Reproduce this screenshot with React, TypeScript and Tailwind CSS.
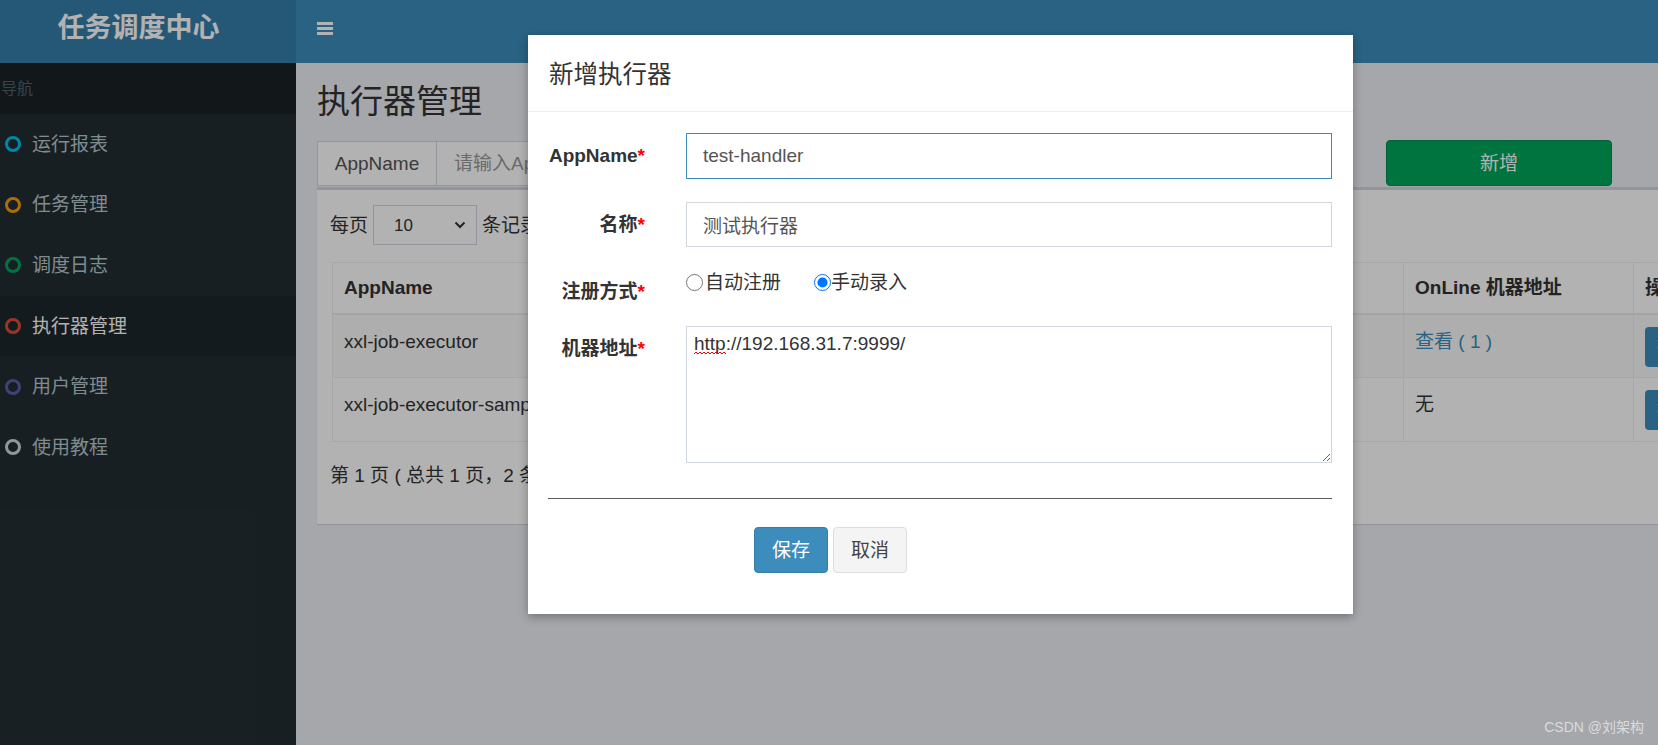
import React from 'react';

// Admin page of the scheduler, with the "新增执行器" dialog open on top

const menu = [
  { name: '运行报表', ring: 'border-[#00c0ef]' },
  { name: '任务管理', ring: 'border-[#f39c12]' },
  { name: '调度日志', ring: 'border-[#00a65a]' },
  { name: '执行器管理', ring: 'border-[#dd4b39]', active: true },
  { name: '用户管理', ring: 'border-[#605ca8]' },
  { name: '使用教程', ring: 'border-[#d2d6de]' },
];

const rows = [
  { app: 'xxl-job-executor', title: '示例执行器', type: '自动注册', online: '查看 ( 1 )', link: true },
  { app: 'xxl-job-executor-sample', title: '测试执行器', type: '手动录入', online: '无', link: false },
];

function Sidebar() {
  return (
    <aside className="w-[296px] shrink-0 bg-[#222d32]">
      <div className="h-[51px] bg-[#1a2226] flex items-center pl-[1px] text-[16px] text-[#4b646f]">导航</div>
      <ul>
        {menu.map((item) => (
          <li
            key={item.name}
            className={`h-[60.6px] flex items-center text-[19px] ${item.active ? 'bg-[#1e282c] text-white' : 'text-[#b8c7ce]'}`}
          >
            <span className={`ml-[5px] w-[16px] h-[16px] rounded-full border-[3px] ${item.ring}`} />
            <span className="ml-[11px]">{item.name}</span>
          </li>
        ))}
      </ul>
    </aside>
  );
}

function ExecutorTable() {
  return (
    <table className="table-fixed border-collapse w-[1501px] ml-[2px] mt-[17px] text-[19px] text-[#333]">
      <colgroup>
        <col className="w-[300px]" />
        <col className="w-[420px]" />
        <col className="w-[351px]" />
        <col className="w-[230px]" />
        <col className="w-[200px]" />
      </colgroup>
      <thead>
        <tr className="h-[51px] border-b-2 border-[#ebebeb]">
          {['AppName', '名称', '注册方式', 'OnLine 机器地址', '操作'].map((h) => (
            <th key={h} className="border border-[#f0f0f0] px-[11px] text-left font-bold">{h}</th>
          ))}
        </tr>
      </thead>
      <tbody>
        {rows.map((r, i) => (
          <tr key={r.app} className={`h-[64px] ${i === 0 ? 'bg-[#f9f9f9]' : 'bg-white'}`}>
            <td className="border border-[#f0f0f0] px-[11px] pt-[13px] align-top leading-[27px]">{r.app}</td>
            <td className="border border-[#f0f0f0] px-[11px] pt-[13px] align-top leading-[27px]">{r.title}</td>
            <td className="border border-[#f0f0f0] px-[11px] pt-[13px] align-top leading-[27px]">{r.type}</td>
            <td className={`border border-[#f0f0f0] px-[11px] pt-[13px] align-top leading-[27px] ${r.link ? 'text-[#3c8dbc]' : ''}`}>
              {r.online}
            </td>
            <td className="border border-[#f0f0f0] px-[11px] pt-[12px] align-top">
              <div className="h-[40px] w-[90px] rounded-[4px] bg-[#3c8dbc] text-white flex items-center px-[12px]">操作</div>
            </td>
          </tr>
        ))}
      </tbody>
    </table>
  );
}

function AddExecutorModal() {
  return (
    <div className="absolute left-[528px] top-[35px] w-[825px] h-[579px] bg-white shadow-[0_3px_9px_rgba(0,0,0,0.3)] text-[#333]">
      <div className="h-[77px] flex items-center pl-[21px] pt-[3px] border-b border-[#eeeeee] text-[24.5px]">新增执行器</div>
      <div className="pl-[20px] pt-[21px]">
        {/* AppName */}
        <div className="flex">
          <label className="w-[97px] text-right font-bold pt-[9px] leading-[27px]">
            AppName<span className="text-[#f00]">*</span>
          </label>
          <input
            defaultValue="test-handler"
            className="ml-[41px] w-[646px] h-[46px] border border-[#3c8dbc] pl-[16px] text-[19px] text-[#555] outline-none"
          />
        </div>
        {/* 名称 */}
        <div className="flex mt-[23px]">
          <label className="w-[97px] text-right font-bold pt-[9px] leading-[27px]">
            名称<span className="text-[#f00]">*</span>
          </label>
          <input
            defaultValue="测试执行器"
            className="ml-[41px] w-[646px] h-[45px] border border-[#d2d6de] pl-[16px] text-[19px] text-[#555] outline-none"
          />
        </div>
        {/* 注册方式 */}
        <div className="flex mt-[22px]">
          <label className="w-[97px] text-right font-bold pt-[9px] leading-[27px]">
            注册方式<span className="text-[#f00]">*</span>
          </label>
          <div className="ml-[41px] flex items-center h-[27px] leading-[27px]">
            <label className="flex items-center">
              <input type="radio" name="addressType" className="m-0 w-[17px] h-[17px]" />
              <span className="ml-[2px]">自动注册</span>
            </label>
            <label className="flex items-center ml-[33px]">
              <input type="radio" name="addressType" defaultChecked className="m-0 w-[17px] h-[17px]" />
              <span>手动录入</span>
            </label>
          </div>
        </div>
        {/* 机器地址 */}
        <div className="flex mt-[21px]">
          <label className="w-[97px] text-right font-bold pt-[9px] leading-[27px]">
            机器地址<span className="text-[#f00]">*</span>
          </label>
          <div className="relative ml-[41px]">
            <textarea
              defaultValue="http://192.168.31.7:9999/"
              spellCheck={false}
              className="block w-[646px] h-[137px] border border-[#d2d6de] pl-[7px] pt-[3px] text-[19px] leading-[27px] text-[#333] outline-none resize-y"
            />
            {/* spell-check squiggle under "http" */}
            <svg className="pointer-events-none absolute left-[8px] top-[25px]" width="32" height="4" viewBox="0 0 32 4" fill="none">
              <path d="M0 3 L2 1 L4 3 L6 1 L8 3 L10 1 L12 3 L14 1 L16 3 L18 1 L20 3 L22 1 L24 3 L26 1 L28 3 L30 1 L32 3" stroke="#e00" strokeWidth="1" />
            </svg>
          </div>
        </div>
        <hr className="mt-[35px] w-[784px] border-t border-[#5a5a5a]" />
        <div className="flex mt-[28px] ml-[206px]">
          <button className="w-[74px] h-[46px] rounded-[4px] bg-[#3c8dbc] border border-[#367fa9] text-white text-[19px]">保存</button>
          <button className="ml-[5px] w-[74px] h-[46px] rounded-[4px] bg-[#f4f4f4] border border-[#dddddd] text-[#444] text-[19px]">取消</button>
        </div>
      </div>
    </div>
  );
}

export default function App() {
  return (
    <div className="relative w-[1658px] h-[745px] overflow-hidden bg-[#ecf0f5] font-['Liberation_Sans','Noto_Sans_CJK_SC',sans-serif] text-[19px] leading-[27px] text-[#333]">
      {/* top bar */}
      <header className="flex h-[63px]">
        <div className="w-[296px] bg-[#367fa9] flex items-center justify-center pr-[19px] pb-[6px] text-[27px] font-bold text-white">
          任务调度中心
        </div>
        <div className="flex-1 bg-[#3c8dbc] flex items-center pl-[21px] pb-[6px]">
          <div className="flex flex-col gap-[2px]">
            <span className="block w-[16px] h-[3px] bg-white" />
            <span className="block w-[16px] h-[3px] bg-white" />
            <span className="block w-[16px] h-[3px] bg-white" />
          </div>
        </div>
      </header>

      <div className="flex h-[682px]">
        <Sidebar />

        <main className="flex-1 min-w-0 overflow-hidden px-[21px] pt-[21px]">
          <h1 className="text-[33px] leading-[36px] text-[#333]">执行器管理</h1>

          <div className="flex items-start justify-between pr-[25px] mt-[20px] h-[46px]">
            <div className="flex mt-[1px] h-[45px] w-[420px] border border-[#d2d6de] bg-white">
              <span className="w-[119px] flex items-center justify-center border-r border-[#d2d6de] text-[#555]">AppName</span>
              <input
                placeholder="请输入AppName"
                className="flex-1 min-w-0 pl-[17px] text-[19px] outline-none placeholder:text-[#999]"
              />
            </div>
            <button className="w-[226px] h-[46px] rounded-[4px] bg-[#00a65a] border border-[#008d4c] text-white text-[19px]">新增</button>
          </div>

          <section className="mt-[1px] w-[1530px] bg-white border-t-[3px] border-[#d2d6de] shadow-[0_1px_1px_rgba(0,0,0,0.1)] pl-[13px] pt-[15px] pb-[35px]">
            <div className="flex items-center h-[40px]">
              <span>每页</span>
              <div className="ml-[5px] w-[104px] h-[40px] border border-[#d2d6de] bg-white flex items-center justify-between pl-[20px] pr-[10px] text-[17px] text-[#333]">
                <span>10</span>
                <svg width="12" height="8" viewBox="0 0 12 8" fill="none">
                  <polyline points="1.5,1.5 6,6 10.5,1.5" stroke="#333" strokeWidth="2" />
                </svg>
              </div>
              <span className="ml-[5px]">条记录</span>
            </div>

            <ExecutorTable />

            <p className="mt-[20px]">第 1 页 ( 总共 1 页，2 条记录 )</p>
          </section>
        </main>
      </div>

      {/* modal backdrop */}
      <div className="absolute inset-0 bg-black/30" />

      <AddExecutorModal />

      <div className="absolute right-[14px] bottom-[9px] text-[14px] leading-[18px] text-white/60">CSDN @刘架构</div>
    </div>
  );
}
